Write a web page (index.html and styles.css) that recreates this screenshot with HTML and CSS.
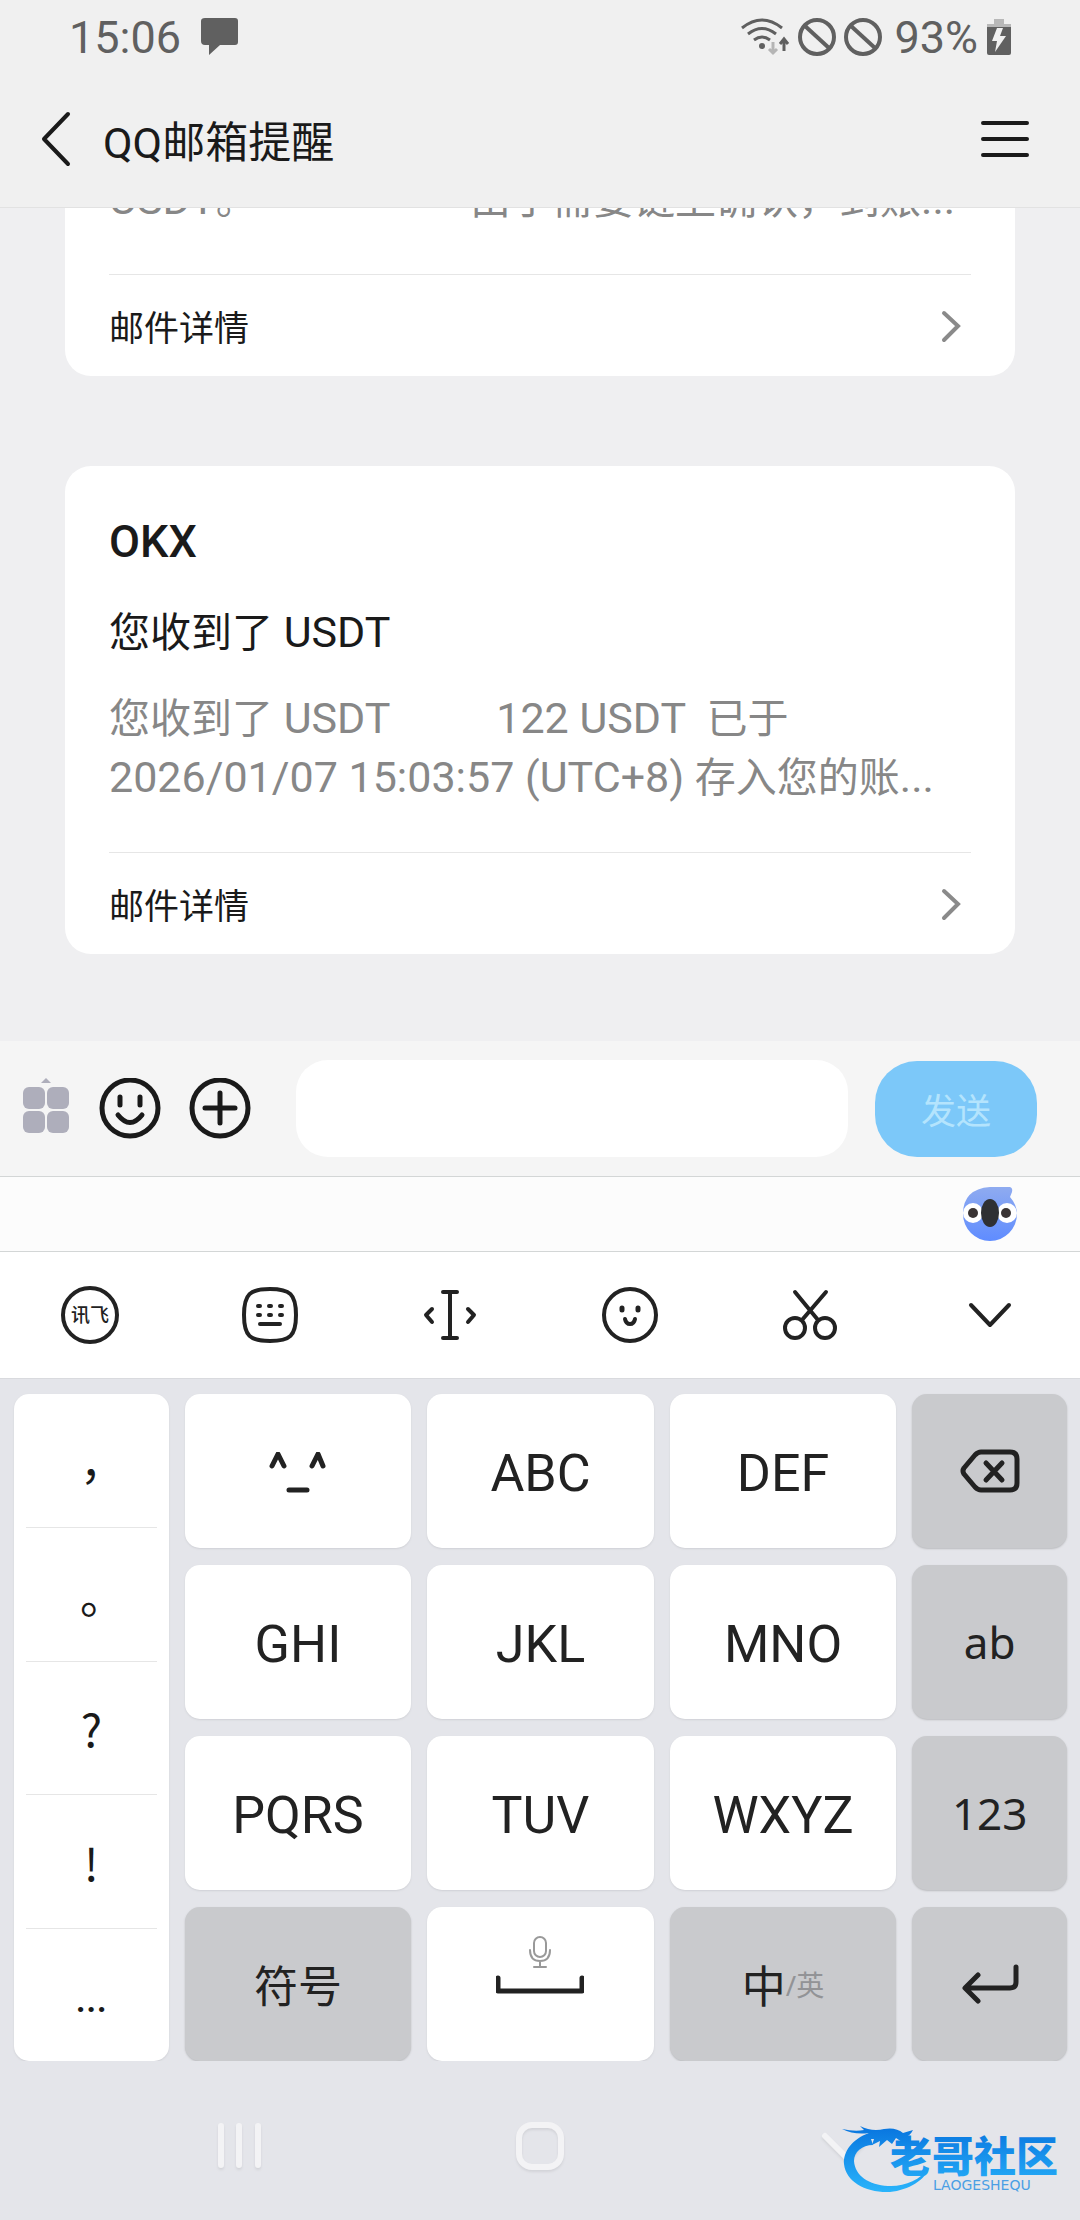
FILE: index.html
```html
<!DOCTYPE html>
<html lang="zh-CN">
<head>
    <meta charset="UTF-8">
    <meta name="viewport" content="width=device-width, initial-scale=1.0">
    <title>QQ邮箱提醒</title>
    <link rel="stylesheet" href="styles.css">
</head>
<body>

    <!-- Status bar -->
    <div class="status-bar">
        <span class="time">15:06</span>
        <svg class="chat-icon" width="38" height="38" viewBox="0 0 38 38"><path d="M4 0H34Q37 0 37 3V24Q37 27 34 27H19L8 37V27H4Q0 27 0 23V3Q0 0 4 0Z" fill="#606060"/></svg>
        <div class="status-right">
            <svg width="50" height="38" viewBox="0 0 50 38" fill="none" stroke="#606060" stroke-width="3">
                <path d="M2 10Q22 -6 42 10M8 16Q22 5 36 16M14 22Q22 16 30 22"/>
                <circle cx="22" cy="28" r="3" fill="#606060" stroke="none"/>
                <path d="M33 24V35M29 31L33 35L37 31" stroke="#b5b5b5"/>
                <path d="M44 33V22M40 26L44 21L48 26"/>
            </svg>
            <svg width="38" height="38" viewBox="0 0 38 38" fill="none" stroke="#606060" stroke-width="4"><circle cx="19" cy="19" r="17"/><path d="M7 8L31 30"/></svg>
            <svg width="38" height="38" viewBox="0 0 38 38" fill="none" stroke="#606060" stroke-width="4"><circle cx="19" cy="19" r="17"/><path d="M7 8L31 30"/></svg>
            <span class="battery-text">93%</span>
            <svg width="24" height="36" viewBox="0 0 24 36"><path d="M7 0H17V5H24V9H0V5H7Z" fill="#b8b8b8"/><path d="M0 8H24V34Q24 36 22 36H2Q0 36 0 34Z" fill="#606060"/><path d="M10 9H16L13 17H19L8 33L10 22H5Z" fill="#f0f0f0"/></svg>
        </div>
    </div>

    <!-- Title bar -->
    <header class="title-bar">
        <button class="icon-btn" aria-label="返回">
            <svg width="30" height="56" viewBox="0 0 30 56" fill="none" stroke="#1a1a1a" stroke-width="4" stroke-linecap="round" stroke-linejoin="round"><path d="M27 3L3 28L27 53"/></svg>
        </button>
        <h1>QQ邮箱提醒</h1>
        <button class="icon-btn" aria-label="菜单">
            <svg width="48" height="40" viewBox="0 0 48 40" stroke="#1a1a1a" stroke-width="4" stroke-linecap="round"><path d="M2 4H46M2 20H46M2 36H46"/></svg>
        </button>
    </header>

    <!-- Messages -->
    <main class="messages">
        <article class="card">
            <p class="desc">USDT<span class="cn">。</span>                    <span class="cn">由于需要链上确认，到账</span>...</p>
            <a href="#" class="detail">
                邮件详情
                <svg width="20" height="34" viewBox="0 0 20 34" fill="none" stroke="#8a8a8a" stroke-width="4" stroke-linecap="round"><path d="M3 4L17 17L3 31"/></svg>
            </a>
        </article>
        <article class="card">
            <h2>OKX</h2>
            <p class="subject"><span class="cn">您收到了</span> USDT</p>
            <p class="desc"><span class="cn">您收到了</span> USDT          122 USDT  <span class="cn">已于</span>
2026/01/07 15:03:57 (UTC+8) <span class="cn">存入您的账</span>...</p>
            <a href="#" class="detail">
                邮件详情
                <svg width="20" height="34" viewBox="0 0 20 34" fill="none" stroke="#8a8a8a" stroke-width="4" stroke-linecap="round"><path d="M3 4L17 17L3 31"/></svg>
            </a>
        </article>
    </main>

    <!-- Input bar -->
    <form class="input-bar">
        <button type="button" class="icon-btn" aria-label="应用">
            <svg width="46" height="62" viewBox="0 0 46 62" fill="#aeaebb"><path d="M18 5L23 0L28 5Z"/><rect x="0" y="9" width="22" height="22" rx="6"/><rect x="24" y="9" width="22" height="22" rx="6"/><rect x="0" y="33" width="22" height="22" rx="6"/><rect x="24" y="33" width="22" height="22" rx="6"/></svg>
        </button>
        <button type="button" class="icon-btn face-btn" aria-label="表情">
            <svg width="62" height="62" viewBox="0 0 62 62" fill="none" stroke="#1a1a1a" stroke-width="5" stroke-linecap="round"><circle cx="31" cy="30" r="28"/><path d="M21 19V27M41 19V27M19 37Q31 52 43 37"/></svg>
        </button>
        <button type="button" class="icon-btn" aria-label="更多">
            <svg width="62" height="62" viewBox="0 0 62 62" fill="none" stroke="#1a1a1a" stroke-width="5" stroke-linecap="round"><circle cx="31" cy="30" r="28"/><path d="M31 15V45M16 30H46"/></svg>
        </button>
        <input type="text" class="message-input" aria-label="消息">
        <button type="button" class="send-btn">发送</button>
    </form>

    <!-- Keyboard -->
    <div class="candidates">
        <button class="icon-btn" aria-label="助手">
            <svg width="54" height="54" viewBox="0 0 54 54">
                <defs>
                    <linearGradient id="koala" x1="0" y1="0" x2="0" y2="1"><stop offset="0" stop-color="#8fabf0"/><stop offset="1" stop-color="#5f8cff"/></linearGradient>
                </defs>
                <path d="M27 0H47Q50 1 49 5L47 10Q54 18 54 27A27 27 0 0 1 0 27Q0 2 27 0Z" fill="url(#koala)"/>
                <circle cx="10" cy="26" r="10" fill="#fff"/>
                <circle cx="44" cy="26" r="10" fill="#fff"/>
                <circle cx="10" cy="26" r="5" fill="#3a3434"/>
                <circle cx="43" cy="26" r="5" fill="#3a3434"/>
                <ellipse cx="27" cy="26" rx="9" ry="14" fill="#2f3033"/>
            </svg>
        </button>
    </div>

    <div class="toolbar">
        <button class="icon-btn" aria-label="讯飞">
            <svg width="58" height="58" viewBox="0 0 58 58"><circle cx="29" cy="29" r="27" fill="none" stroke="#222" stroke-width="4"/><text x="29" y="36" text-anchor="middle" class="logo-text">讯飞</text></svg>
        </button>
        <button class="icon-btn" aria-label="键盘">
            <svg width="58" height="58" viewBox="0 0 58 58" fill="none" stroke="#222" stroke-width="4" stroke-linecap="round"><path d="M29 3C49 3 55 8 55 29S49 55 29 55S3 50 3 29S9 3 29 3Z"/><path d="M17 20H19M28 20H30M39 20H41M17 29H19M28 29H30M39 29H41M19 38H39"/></svg>
        </button>
        <button class="icon-btn" aria-label="光标">
            <svg width="58" height="58" viewBox="0 0 58 58" fill="none" stroke="#222" stroke-width="4" stroke-linecap="round" stroke-linejoin="round"><path d="M22 6H36M29 6V52M22 52H36M11 23L5 29L11 36M47 23L53 29L47 36"/></svg>
        </button>
        <button class="icon-btn" aria-label="表情">
            <svg width="58" height="58" viewBox="0 0 58 58" fill="none" stroke="#222" stroke-width="4" stroke-linecap="round"><circle cx="29" cy="29" r="26"/><path d="M21 22V24M37 22V24" stroke-width="5"/><path d="M24 33Q25 38 29 38T34 33"/></svg>
        </button>
        <button class="icon-btn" aria-label="剪切">
            <svg width="58" height="58" viewBox="0 0 58 58" fill="none" stroke="#222" stroke-width="4" stroke-linecap="round"><circle cx="14" cy="42" r="10"/><circle cx="44" cy="42" r="10"/><path d="M14 6L37 34M45 6L21 34"/></svg>
        </button>
        <button class="icon-btn" aria-label="收起">
            <svg width="58" height="58" viewBox="0 0 58 58" fill="none" stroke="#222" stroke-width="4" stroke-linecap="round" stroke-linejoin="round"><path d="M10 19L29 39L48 19"/></svg>
        </button>
    </div>

    <div class="keyboard">
        <div class="symbols">
            <button class="half">，</button>
            <button class="half">。</button>
            <button>?</button>
            <button>!</button>
            <button class="dots">...</button>
        </div>
        <button class="key" aria-label="颜文字">
            <svg width="58" height="42" viewBox="0 0 58 42" fill="none" stroke="#222" stroke-width="5" stroke-linecap="round" stroke-linejoin="round"><path d="M3 14L9 2L15 14M43 14L49 2L54 14M20 38H38"/></svg>
        </button>
        <button class="key">ABC</button>
        <button class="key">DEF</button>
        <button class="key gray" aria-label="删除">
            <svg width="60" height="44" viewBox="0 0 60 44" fill="none" stroke="#222" stroke-width="5" stroke-linecap="round" stroke-linejoin="round"><path d="M21 3H50Q57 3 57 10V34Q57 41 50 41H21Q18 41 15 38L4 25Q2 22 4 19L15 6Q18 3 21 3Z"/><path d="M26 14L42 31M42 14L26 31"/></svg>
        </button>
        <button class="key">GHI</button>
        <button class="key">JKL</button>
        <button class="key">MNO</button>
        <button class="key gray">ab</button>
        <button class="key">PQRS</button>
        <button class="key">TUV</button>
        <button class="key">WXYZ</button>
        <button class="key gray">123</button>
        <button class="key gray">符号</button>
        <button class="key space" aria-label="空格">
            <svg width="88" height="60" viewBox="0 0 88 60" fill="none" stroke-linecap="round" stroke-linejoin="round"><g stroke="#999" stroke-width="2"><rect x="38" y="2" width="12" height="20" rx="6"/><path d="M34 15Q34 26 44 26T54 15M44 26V32M38 32H50"/></g><path d="M2 43V56H86V43" stroke="#222" stroke-width="5"/></svg>
        </button>
        <button class="key gray">中<small>/英</small></button>
        <button class="key gray" aria-label="换行">
            <svg width="58" height="40" viewBox="0 0 58 40" fill="none" stroke="#222" stroke-width="5" stroke-linecap="round" stroke-linejoin="round"><path d="M55 3V18Q55 24 49 24H5M17 11L4 24L17 37"/></svg>
        </button>
    </div>

    <!-- System navigation -->
    <nav class="nav-bar">
        <button class="icon-btn" aria-label="最近任务">
            <svg width="48" height="50" viewBox="0 0 48 50" stroke="#f3f3f5" stroke-width="6" stroke-linecap="round"><path d="M5 5V44M23 5V44M42 5V44"/></svg>
        </button>
        <button class="icon-btn" aria-label="主页">
            <svg width="50" height="50" viewBox="0 0 50 50" fill="none" stroke="#f3f3f5" stroke-width="6"><rect x="4" y="4" width="42" height="42" rx="13"/></svg>
        </button>
        <button class="icon-btn" aria-label="收起键盘">
            <svg width="50" height="50" viewBox="0 0 50 50" fill="none" stroke="#f3f3f5" stroke-width="6" stroke-linecap="round"><path d="M10 15L32 37L46 23"/></svg>
        </button>
    </nav>

    <!-- Site watermark -->
    <svg class="watermark" width="226" height="76" viewBox="0 0 226 76">
        <defs>
            <linearGradient id="wm" gradientUnits="userSpaceOnUse" x1="0" y1="8" x2="0" y2="70"><stop offset="0" stop-color="#0a78e0"/><stop offset="1" stop-color="#29b4fb"/></linearGradient>
        </defs>
        <g fill="url(#wm)">
            <path d="M29 11C12 17 3 30 4 42C6 60 26 71 50 70C69 68 85 58 89 46C80 58 64 65 48 64C29 63 15 54 14 39C14 30 22 23 33 23Z"/>
            <path d="M2 7Q15 10 24 8L20 4Q32 10 44 7Q56 5 63 11L73 8Q70 14 65 15L71 20H62L56 16L52 22L47 18L39 25L40 19L32 23L34 17L25 17L29 11Q14 13 2 7Z"/>
            <text x="50" y="50" class="wm-title">老哥社区</text>
        </g>
        <text x="93" y="68" class="wm-sub">LAOGESHEQU</text>
    </svg>

</body>
</html>
```

FILE: styles.css
```css
/* General Reset */
* { margin: 0; padding: 0; box-sizing: border-box; }
body { display: flex; flex-direction: column; height: 100vh; position: relative; overflow: hidden; font-family: Roboto, 'Noto Sans CJK SC', sans-serif; background-color: #efeff1; color: #1a1a1a; }
button { font-family: inherit; color: inherit; border: none; background: none; cursor: pointer; }
svg { display: block; flex-shrink: 0; }
.icon-btn { display: flex; align-items: center; justify-content: center; }

/* Status Bar */
.status-bar { display: flex; align-items: center; height: 74px; padding: 0 69px; background-color: #f0f0f0; color: #606060; font-size: 45px; }
.chat-icon { margin-left: 20px; }
.status-right { display: flex; align-items: center; gap: 8px; margin-left: auto; }
.battery-text { margin: 0 1px 0 4px; }

/* Title Bar */
.title-bar { display: flex; align-items: center; height: 134px; padding: 0 51px 4px 41px; background-color: #f0f0f0; border-bottom: 1px solid #e2e2e2; }
.title-bar h1 { flex: 1; margin-left: 32px; font-size: 43px; font-weight: 400; }

/* Messages */
.messages { display: flex; flex-direction: column; justify-content: flex-end; flex: 1; min-height: 0; gap: 90px; padding: 0 65px 87px; overflow: hidden; }
.card { flex-shrink: 0; padding: 46px 44px 0; background-color: #fff; border-radius: 26px; }
.card h2 { font-size: 45px; font-weight: 500; line-height: 60px; }
.subject { margin-top: 31px; font-size: 43px; line-height: 58px; }
.desc { margin-top: 28px; font-size: 43px; line-height: 59px; color: #878787; white-space: pre; }
.cn { font-size: 41px; line-height: 1; }
.detail { display: flex; align-items: center; justify-content: space-between; height: 102px; margin-top: 45px; padding-right: 10px; border-top: 1px solid #e6e6e6; font-size: 35px; color: inherit; text-decoration: none; }

/* Input Bar */
.input-bar { display: flex; align-items: center; height: 136px; padding: 0 43px 0 23px; background-color: #f5f5f5; border-bottom: 1px solid #d3d6d6; }
.face-btn { margin: 0 28px 0 30px; }
.message-input { flex: 1; min-width: 0; height: 97px; margin: 0 27px 0 45px; padding: 0 30px; border: none; border-radius: 32px; background-color: #fff; font-size: 42px; }
.send-btn { width: 162px; height: 96px; border-radius: 42px; background-color: #7cc8f9; color: #b4e4fd; font-size: 35px; }

/* Keyboard Top */
.candidates { display: flex; align-items: center; justify-content: flex-end; height: 75px; padding: 0 63px 0; background-color: #fcfcfc; border-bottom: 1px solid #d3d6d6; }
.toolbar { display: grid; grid-template-columns: repeat(6, 1fr); height: 127px; background-color: #fff; border-bottom: 1px solid #d9dade; }
.logo-text { font-size: 19px; font-weight: 500; fill: #222; }

/* Keys */
.keyboard { display: grid; grid-template-columns: 155fr 227fr 227fr 227fr 155fr; grid-template-rows: repeat(4, 154px); gap: 17px 16px; padding: 15px 13px 0 14px; background-color: #e4e5ea; }
.symbols { grid-row: span 4; display: grid; grid-template-rows: repeat(5, 1fr); padding: 0 12px; background-color: #fff; border-radius: 15px; box-shadow: 0 1px 2px #cfd0d5; }
.symbols button { font-family: 'Noto Sans CJK SC', sans-serif; font-size: 45px; }
.symbols button + button { border-top: 1px solid #e6e6e6; }
.symbols .half { font-feature-settings: 'halt'; }
.symbols .dots { padding-top: 8px; font-family: Roboto, sans-serif; font-size: 38px; font-weight: 500; }
.key { display: flex; align-items: center; justify-content: center; padding-top: 4px; background-color: #fff; border-radius: 15px; box-shadow: 0 1px 2px #cfd0d5; font-size: 52px; color: #222; }
.key.gray { padding-top: 0; background-color: #c9cacd; box-shadow: 0 1px 2px #b9babd; font-family: 'Noto Sans', 'Noto Sans CJK SC', sans-serif; font-size: 44px; }
.key small { font-size: 28px; color: #929396; }
.key.space { align-items: flex-start; padding-top: 28px; }

/* System Navigation */
.nav-bar { display: grid; grid-template-columns: repeat(3, 300px); justify-content: center; height: 159px; padding-top: 10px; background-color: #e4e5ea; }
.nav-bar svg { filter: drop-shadow(0 2px 1px #d2d3d8); }

/* Watermark */
.watermark { position: absolute; right: 14px; bottom: 22px; }
.wm-title { font-family: 'Noto Sans CJK SC', sans-serif; font-size: 42px; font-weight: 900; }
.wm-sub { font-family: 'DejaVu Sans', sans-serif; font-size: 14px; fill: #4a9fe4; }
```
